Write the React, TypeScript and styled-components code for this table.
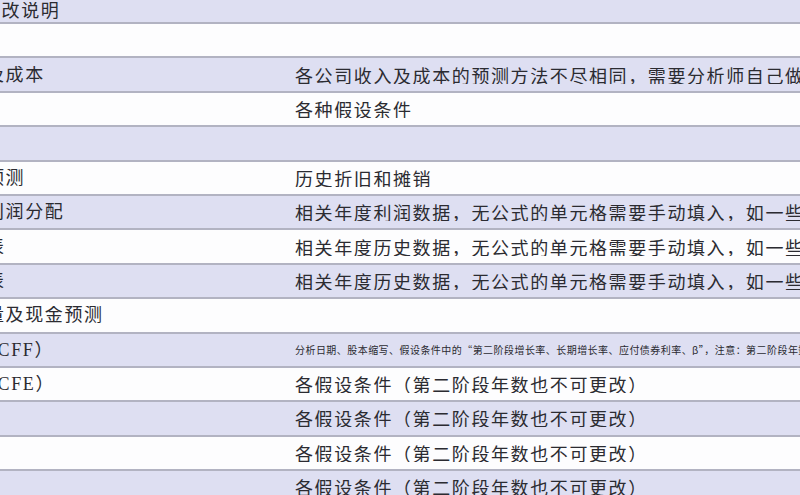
import React from 'react'
import styled, { createGlobalStyle } from 'styled-components'

const GlobalStyle = createGlobalStyle`
  html, body {
    margin: 0;
    padding: 0;
    width: 800px;
    height: 495px;
    overflow: hidden;
    background: #fcfcfd;
  }
  body {
    font-family: 'Noto Sans CJK SC', 'Noto Sans', sans-serif;
    color: #2b2b31;
  }
`

const Sheet = styled.div`
  width: 800px;
  height: 495px;
  overflow: hidden;
  display: flex;
  flex-direction: column;
`

const Row = styled.div<{ $shaded: boolean; $height?: number }>`
  flex: none;
  box-sizing: border-box;
  height: ${(p) => p.$height ?? 34.4}px;
  display: grid;
  grid-template-columns: 309px 1fr;
  margin-left: -14px;
  align-items: center;
  background: ${(p) => (p.$shaded ? '#dedff2' : '#fdfdfe')};
  border-bottom: 2px solid #b2b3c2;
  white-space: nowrap;
  overflow: hidden;
`

const NameCell = styled.div<{ $pull?: number }>`
  font-family: 'Liberation Serif', 'Noto Sans CJK SC', serif;
  font-size: 18px;
  letter-spacing: 1.6px;
  line-height: 1;
  margin-left: ${(p) => -(p.$pull ?? 0)}px;
  overflow: hidden;
`

const NoteCell = styled.div<{ $tiny?: boolean }>`
  font-size: ${(p) => (p.$tiny ? '10px' : '18px')};
  letter-spacing: ${(p) => (p.$tiny ? '0.45px' : '1.6px')};
  line-height: 1;
  overflow: hidden;
`

type Line = { left?: string; right?: string; tiny?: boolean; pull?: number }

const lines: Line[] = [
  { left: '修改说明', pull: 4 },
  {},
  { left: '及成本', right: '各公司收入及成本的预测方法不尽相同，需要分析师自己做' },
  { right: '各种假设条件' },
  {},
  { left: '预测', right: '历史折旧和摊销' },
  { left: '利润分配', right: '相关年度利润数据，无公式的单元格需要手动填入，如一些' },
  { left: '表', right: '相关年度历史数据，无公式的单元格需要手动填入，如一些' },
  { left: '表', right: '相关年度历史数据，无公式的单元格需要手动填入，如一些' },
  { left: '量及现金预测' },
  {
    left: 'FCFF）',
    right:
      '分析日期、股本缩写、假设条件中的“第二阶段增长率、长期增长率、应付债券利率、β”，注意：第二阶段年数',
    tiny: true,
  },
  { left: 'FCFE）', right: '各假设条件（第二阶段年数也不可更改）' },
  { right: '各假设条件（第二阶段年数也不可更改）' },
  { right: '各假设条件（第二阶段年数也不可更改）' },
  { right: '各假设条件（第二阶段年数也不可更改）' },
]

export default function App() {
  return (
    <>
      <GlobalStyle />
      <Sheet>
        {lines.map((line, i) => (
          <Row key={i} $shaded={i % 2 === 0} $height={i === 0 ? 24 : undefined}>
            <NameCell $pull={line.pull}>{line.left}</NameCell>
            <NoteCell $tiny={line.tiny}>{line.right}</NoteCell>
          </Row>
        ))}
      </Sheet>
    </>
  )
}
